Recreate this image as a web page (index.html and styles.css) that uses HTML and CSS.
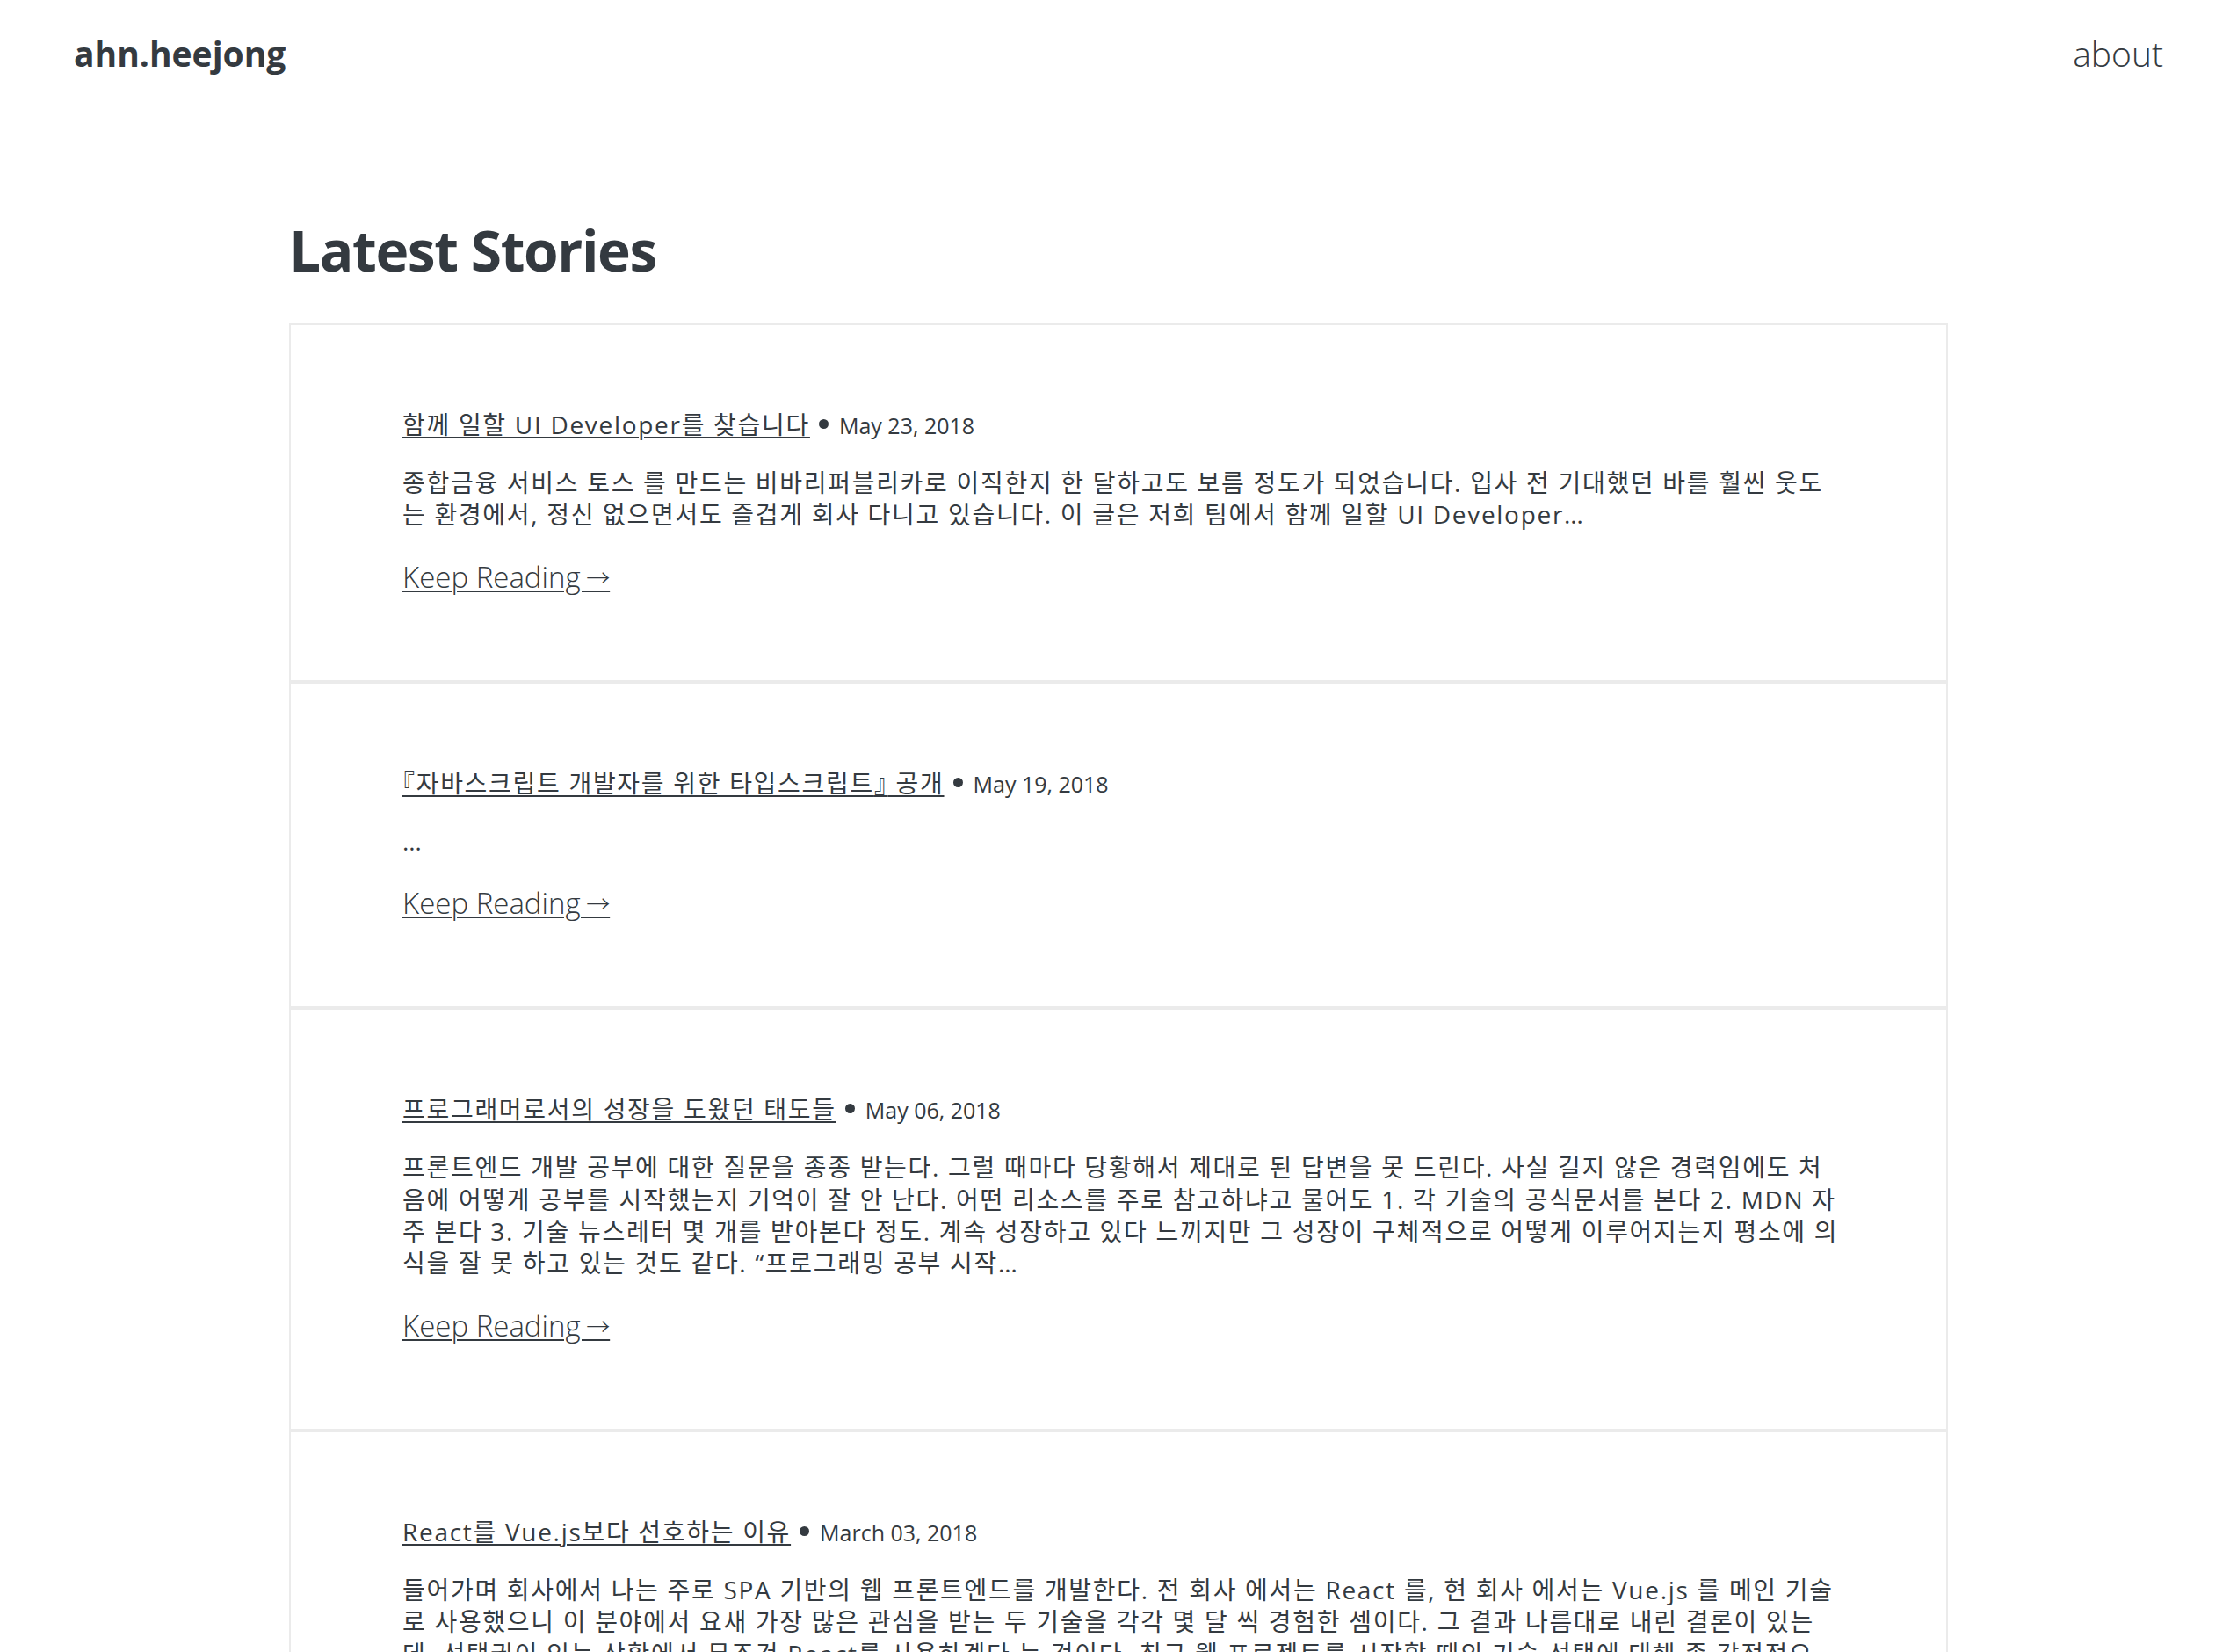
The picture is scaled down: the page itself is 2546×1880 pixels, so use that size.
FILE: index.html
```html
<!DOCTYPE html>
<html lang="ko">
<head>
<meta charset="utf-8">
<title>ahn.heejong</title>
<link rel="stylesheet" href="styles.css">
</head>
<body>
<header class="site-header">
  <a class="logo" href="#">ahn.heejong</a>
  <nav class="nav"><a href="#">about</a></nav>
</header>
<main class="container">
  <h1 class="page-title">Latest Stories</h1>
  <section class="stories">
    <article class="story">
      <div class="story-head"><a class="story-title" href="#">함께 일할 UI Developer를 찾습니다</a><span class="sep" aria-hidden="true"></span><span class="story-date">May 23, 2018</span></div>
      <p class="story-excerpt">종합금융 서비스 토스 를 만드는 비바리퍼블리카로 이직한지 한 달하고도 보름 정도가 되었습니다. 입사 전 기대했던 바를 훨씬 웃도는 환경에서, 정신 없으면서도 즐겁게 회사 다니고 있습니다. 이 글은 저희 팀에서 함께 일할 UI Developer…</p>
      <a class="keep" href="#">Keep Reading <span class="arrow">→</span></a>
    </article>
    <article class="story">
      <div class="story-head"><a class="story-title" href="#"><span class="punct">『</span>자바스크립트 개발자를 위한 타입스크립트<span class="punct">』</span> 공개</a><span class="sep" aria-hidden="true"></span><span class="story-date">May 19, 2018</span></div>
      <p class="story-excerpt">…</p>
      <a class="keep" href="#">Keep Reading <span class="arrow">→</span></a>
    </article>
    <article class="story">
      <div class="story-head"><a class="story-title" href="#">프로그래머로서의 성장을 도왔던 태도들</a><span class="sep" aria-hidden="true"></span><span class="story-date">May 06, 2018</span></div>
      <p class="story-excerpt">프론트엔드 개발 공부에 대한 질문을 종종 받는다. 그럴 때마다 당황해서 제대로 된 답변을 못 드린다. 사실 길지 않은 경력임에도 처음에 어떻게 공부를 시작했는지 기억이 잘 안 난다. 어떤 리소스를 주로 참고하냐고 물어도 1. 각 기술의 공식문서를 본다 2. MDN 자주 본다 3. 기술 뉴스레터 몇 개를 받아본다 정도. 계속 성장하고 있다 느끼지만 그 성장이 구체적으로 어떻게 이루어지는지 평소에 의식을 잘 못 하고 있는 것도 같다. “프로그래밍 공부 시작…</p>
      <a class="keep" href="#">Keep Reading <span class="arrow">→</span></a>
    </article>
    <article class="story">
      <div class="story-head"><a class="story-title" href="#">React를 Vue.js보다 선호하는 이유</a><span class="sep" aria-hidden="true"></span><span class="story-date">March 03, 2018</span></div>
      <p class="story-excerpt">들어가며 회사에서 나는 주로 SPA 기반의 웹 프론트엔드를 개발한다. 전 회사 에서는 React 를, 현 회사 에서는 Vue.js 를 메인 기술로 사용했으니 이 분야에서 요새 가장 많은 관심을 받는 두 기술을 각각 몇 달 씩 경험한 셈이다. 그 결과 나름대로 내린 결론이 있는데, 선택권이 있는 상황에서 무조건 React를 사용하겠다 는 것이다. 최근 웹 프로젝트를 시작할 때의 기술 선택에 대해 좀 감정적으로…</p>
      <a class="keep" href="#">Keep Reading <span class="arrow">→</span></a>
    </article>
  </section>
</main>
</body>
</html>
```
FILE: styles.css
```css
html, body {
  margin: 0;
  padding: 0;
  background: #ffffff;
}

body {
  font-family: "Open Sans", "Noto Sans CJK KR", sans-serif;
  color: #343a40;
  font-weight: 400;
}

a {
  color: inherit;
}

.site-header {
  display: flex;
  justify-content: space-between;
  align-items: baseline;
  padding: 34px 84px 0;
}

.logo {
  font-size: 39px;
  line-height: 53px;
  font-weight: 700;
  text-decoration: none;
}

.nav a {
  font-size: 39px;
  line-height: 53px;
  font-weight: 300;
  text-decoration: none;
}

.container {
  width: 1888px;
  margin: 0 auto;
}

.page-title {
  font-size: 64px;
  line-height: 77px;
  font-weight: 700;
  letter-spacing: -1.4px;
  margin: 159px 0 45px;
}

.stories {
  display: flex;
  flex-direction: column;
}

.story {
  border: 2px solid #ebebeb;
  padding: 93px 121px 95px 127px;
}

.story-head {
  font-size: 28px;
  line-height: 40px;
}

.story-title {
  letter-spacing: 1.7px;
  text-decoration: underline;
  text-decoration-thickness: 2px;
  text-underline-offset: 3px;
}

.punct {
  font-feature-settings: "halt";
}

.sep {
  display: inline-block;
  width: 11px;
  height: 11px;
  border-radius: 50%;
  background: #343a40;
  margin: 0 12px 0 10px;
  vertical-align: 6px;
}

.story-date {
  font-size: 25px;
  font-weight: 400;
}

.story-excerpt {
  font-size: 28px;
  line-height: 36.4px;
  letter-spacing: 1.7px;
  margin: 27px 0 31px;
}

.keep {
  display: inline-block;
  font-size: 33px;
  line-height: 44px;
  font-weight: 300;
  text-decoration: underline;
  text-decoration-thickness: 2px;
  text-underline-offset: 3px;
}

.arrow {
  font-family: "Noto Sans CJK KR", sans-serif;
  font-weight: 300;
  font-size: 27px;
  margin-left: -2px;
  vertical-align: 1px;
}
```
